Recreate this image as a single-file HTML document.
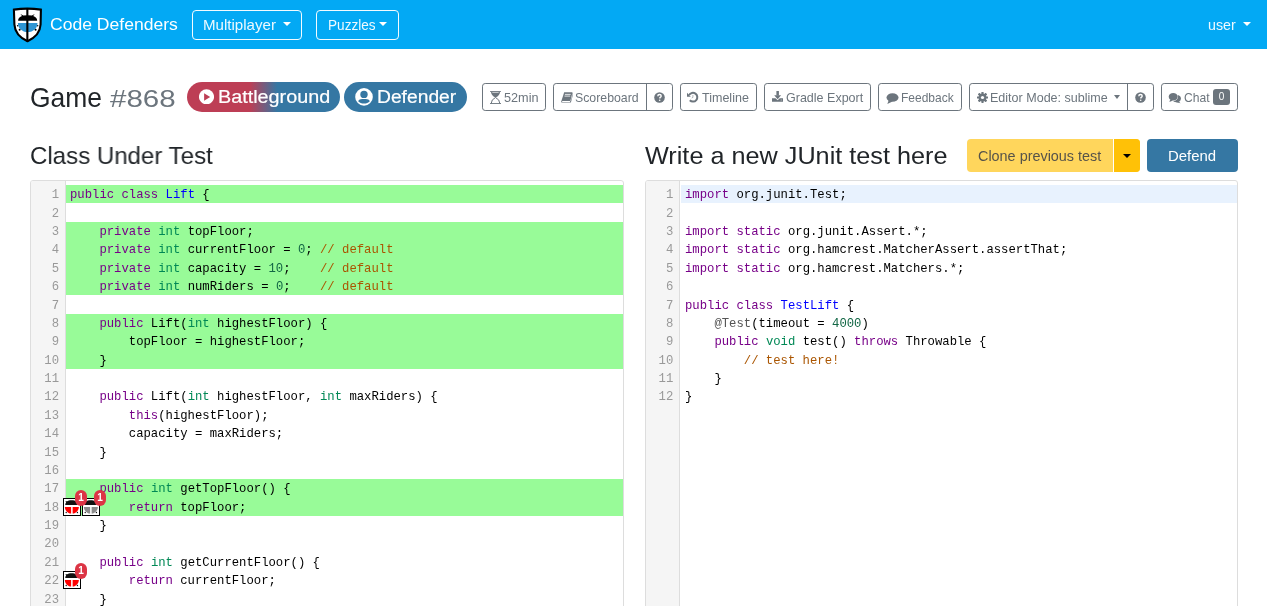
<!DOCTYPE html>
<html><head><meta charset="utf-8"><title>Code Defenders</title><style>
*{box-sizing:border-box;margin:0;padding:0}
html,body{width:1267px;height:606px;overflow:hidden;background:#fff}
body{font-family:"Liberation Sans",sans-serif;color:#212529;position:relative}
.abs{position:absolute;white-space:nowrap}
#nav{position:absolute;left:0;top:0;width:1267px;height:49px;background:#03a9f4}
.nbtn{position:absolute;top:10px;height:30px;border:1px solid rgba(255,255,255,.95);border-radius:4px}
.caret{position:absolute;width:0;height:0;border-left:4px solid transparent;border-right:4px solid transparent;border-top:4.5px solid #fff}
.wt{color:#fff}
.pill{position:absolute;top:82px;height:30px;border-radius:15px;color:#fff}
.ob{position:absolute;top:83px;height:28px;border:1px solid #6c757d;border-radius:3.2px;color:#6c757d}
.ed{position:absolute;top:180px;width:594px;height:440px;border:1px solid #ddd;border-radius:3px;overflow:hidden;background:#fff}
.gut{position:absolute;left:0;top:0;width:35px;height:100%;background:#f5f5f5;border-right:1px solid #ddd;padding-top:4px}
.gut div{height:18.375px;line-height:18.375px;font-family:"Liberation Mono",monospace;font-size:12.25px;color:#999;text-align:right;padding-right:6px}
.ed + .ed .gut div{padding-right:5.7px}
.code{position:absolute;left:35px;top:0;right:0;padding-top:4px}
.ln{height:18.375px;line-height:18.375px;font-family:"Liberation Mono",monospace;font-size:12.25px;color:#000;white-space:pre;padding-left:4px}
.ln.g{background:#98fb98}
.ln.a{background:#e8f2fe}
.tx{position:relative;top:1.3px} .gut div{position:relative;top:1.3px}
.k{color:#708} .t{color:#085} .d{color:#00f} .c{color:#a50} .n{color:#164} .m{color:#555}
.bug{position:absolute}
.bdg{position:absolute;width:12px;height:16px;border-radius:6px;background:#dc3545;color:#fff;font-size:10px;font-weight:bold;text-align:center;line-height:16px}
</style></head>
<body><div id="root" style="position:absolute;left:0;top:0;width:1267px;height:606px;overflow:hidden;will-change:transform">
<div id="nav"><svg class="abs" style="left:12px;top:7px" width="31" height="36" viewBox="0 0 31 36">
<path d="M1.9 2.6 Q15.3 0.6 28.9 2.6 L28.6 17.5 Q28 28.5 15.5 34.2 Q3 28.5 2.4 17.5 Z" fill="#fff" stroke="#000" stroke-width="2.1"/>
<path d="M6.1 13.7 C6.1 11.3 7.8 9.5 10 8.9 L8.4 6.9 L11.3 8.4 Q15.5 7.9 19.9 8.4 L22.8 6.9 L21.2 8.9 C23.4 9.5 25.2 11.3 25.2 13.7 Z" fill="#000"/>
<path d="M5.9 15.9 H25.5 C25.5 21.2 21.2 25 15.7 25 C10.2 25 5.9 21.2 5.9 15.9 Z" fill="#2e95d3"/>
<rect x="14.3" y="1.5" width="2.1" height="33" fill="#000"/>
<circle cx="7.6" cy="22.8" r="1" fill="#000"/><circle cx="23.6" cy="22.8" r="1" fill="#000"/>
<circle cx="5.6" cy="18.7" r="0.7" fill="#000"/><circle cx="25.7" cy="18.7" r="0.7" fill="#000"/>
</svg><div class="nbtn" style="left:192px;width:110px"></div><div class="caret" style="left:283px;top:22px"></div><div class="nbtn" style="left:316px;width:83px"></div><div class="caret" style="left:379.3px;top:22px"></div><div class="caret" style="left:1243px;top:22px"></div></div><div class="pill" style="left:187px;width:153px;background:linear-gradient(90deg,#bd3e55 41%,#3577a3 59%)"></div><svg class="abs" style="left:199px;top:88.7px" width="15" height="15.5" viewBox="0 0 15 15.5"><circle cx="7.5" cy="7.75" r="7.6" fill="#fff"/><path d="M5.1 4.2 L11.2 7.9 L5.1 11.7 Z" fill="#bd3e55"/></svg><div class="pill" style="left:344px;width:123px;background:#3577a3"></div><svg class="abs" style="left:355px;top:87.6px" width="18" height="18" viewBox="0 0 18 18"><circle cx="9" cy="8.9" r="8.8" fill="#fff"/><circle cx="9" cy="6.4" r="3.7" fill="#3577a3"/><path d="M3.2 13.2 C3.6 11.7 5.4 11 7.2 11 H10.8 C12.6 11 14.4 11.7 14.8 13.2 C13.4 14.8 11.4 15.6 9 15.6 C6.6 15.6 4.6 14.8 3.2 13.2 Z" fill="#3577a3"/></svg><div class="ob" style="left:482px;width:64px"></div><svg class="abs" style="left:490px;top:91px" width="11" height="13" viewBox="0 0 11 13"><path d="M0 0.3 H11 M0 12.6 H11" stroke="#6c757d" stroke-width="1"/><path d="M1 0.5 H10 Q10 4.5 5.5 6.5 Q1 4.5 1 0.5Z" fill="#6c757d"/><rect x="2.3" y="1.1" width="6.4" height="0.8" fill="#fff" opacity="0.75"/><path d="M1.2 12.5 Q1.2 8.5 5.5 6.5 Q9.8 8.5 9.8 12.5" fill="none" stroke="#6c757d" stroke-width="1"/></svg><div class="ob" style="left:553px;width:120px"></div><div class="abs" style="left:646px;top:83px;width:1px;height:28px;background:#6c757d"></div><svg class="abs" style="left:561px;top:92px" width="12" height="11" viewBox="0 0 12 11"><path d="M3.2 0.2 H11.3 L12 2.6 L9.9 10.6 H1.3 Q0 10.6 0.2 9.4 Z" fill="#6c757d"/><path d="M1.1 9 H9.2 L8.9 9.9 H1.2 Z" fill="#fff"/><path d="M11.3 1.3 L11.7 2.6 L9.7 9.6 L9.4 8.6 Z" fill="#fff" opacity="0.8"/><path d="M3.9 2.4 H9.7 M3.5 4.1 H9.2" stroke="#fff" stroke-width="0.8"/></svg><svg class="abs" style="left:654px;top:92.4px" width="11" height="11" viewBox="0 0 11 11"><circle cx="5.5" cy="5.5" r="5.3" fill="#6c757d"/><path d="M3.8 4.2 Q3.8 2.5 5.5 2.5 Q7.2 2.5 7.2 4 Q7.2 5 5.9 5.6 L5.9 6.6" fill="none" stroke="#fff" stroke-width="1.4"/><circle cx="5.7" cy="8.3" r="0.8" fill="#fff"/></svg><div class="ob" style="left:680px;width:77px"></div><svg class="abs" style="left:686px;top:91px" width="13" height="13" viewBox="0 0 13 13"><path d="M3.09 4.0 A4.4 4.4 0 1 1 3.79 9.31" fill="none" stroke="#6c757d" stroke-width="2"/><path d="M1 1.8 L4.8 5.8 L1 5.8 Z" fill="#6c757d"/><path d="M6.9 3.9 V6.4 L5.7 7" fill="none" stroke="#6c757d" stroke-width="0.9" opacity="0.6"/></svg><div class="ob" style="left:764px;width:107px"></div><svg class="abs" style="left:771.8px;top:91.1px" width="11" height="10.7" viewBox="0 0 11 10.7"><rect x="4.4" y="0" width="2.5" height="4.6" fill="#6c757d"/><path d="M2.2 4.3 H9.1 L5.65 8.2 Z" fill="#6c757d"/><path d="M0 7.2 H3.5 L5.65 9.3 L7.8 7.2 H11 V10.7 H0 Z" fill="#6c757d"/><rect x="8.6" y="8.6" width="1.4" height="0.8" fill="#fff" opacity="0.6"/></svg><div class="ob" style="left:878px;width:84px"></div><svg class="abs" style="left:885.6px;top:92.8px" width="13" height="12" viewBox="0 0 13 12"><ellipse cx="6.5" cy="4.5" rx="6" ry="4.3" fill="#6c757d"/><path d="M2.8 7 L1.3 11 L6.5 8.6 Z" fill="#6c757d"/></svg><div class="ob" style="left:969px;width:185px"></div><div class="abs" style="left:1127px;top:83px;width:1px;height:28px;background:#6c757d"></div><svg class="abs" style="left:977px;top:92px" width="11" height="11" viewBox="0 0 11 11"><g fill="#6c757d"><circle cx="5.5" cy="5.5" r="3.9"/><rect x="4.4" y="0" width="2.2" height="11" rx="0.4"/><rect x="4.4" y="0" width="2.2" height="11" rx="0.4" transform="rotate(45 5.5 5.5)"/><rect x="4.4" y="0" width="2.2" height="11" rx="0.4" transform="rotate(90 5.5 5.5)"/><rect x="4.4" y="0" width="2.2" height="11" rx="0.4" transform="rotate(135 5.5 5.5)"/></g><circle cx="5.5" cy="5.5" r="1.6" fill="#fff"/></svg><div class="caret" style="left:1113.5px;top:95px;border-top-color:#6c757d;border-left-width:3.5px;border-right-width:3.5px;border-top-width:4px"></div><svg class="abs" style="left:1135px;top:92.4px" width="11" height="11" viewBox="0 0 11 11"><circle cx="5.5" cy="5.5" r="5.3" fill="#6c757d"/><path d="M3.8 4.2 Q3.8 2.5 5.5 2.5 Q7.2 2.5 7.2 4 Q7.2 5 5.9 5.6 L5.9 6.6" fill="none" stroke="#fff" stroke-width="1.4"/><circle cx="5.7" cy="8.3" r="0.8" fill="#fff"/></svg><div class="ob" style="left:1161px;width:77px"></div><svg class="abs" style="left:1168px;top:92px" width="14" height="12" viewBox="0 0 14 12"><ellipse cx="8.6" cy="6.6" rx="4.3" ry="3.7" fill="#6c757d"/><path d="M10.4 9.2 L12.6 11.3 L8 10.2 Z" fill="#6c757d"/><ellipse cx="5.2" cy="4.8" rx="4.9" ry="4.1" fill="#fff"/><ellipse cx="5.2" cy="4.8" rx="4.5" ry="3.8" fill="#6c757d"/><path d="M2.2 7.4 L1.4 10 L5 8.4 Z" fill="#6c757d"/></svg><div class="abs" style="left:1213px;top:89px;width:17px;height:16px;background:#6c757d;border-radius:3px;color:#fff;font-size:10px;line-height:15.5px;text-align:center">0</div><div class="abs" style="left:967px;top:139px;width:173px;height:33px;background:#ffd65c;border-radius:4px"></div><div class="abs" style="left:1113px;top:139px;width:27px;height:33px;background:#ffc107;border-radius:0 4px 4px 0;border-left:1px solid #fff"></div><div class="caret" style="left:1123px;top:154px;border-top-color:#000;border-left-width:4px;border-right-width:4px;border-top-width:4.5px"></div><div class="abs" style="left:1147px;top:139px;width:91px;height:33px;background:#3577a3;border-radius:4px"></div><div class="abs" style="left:49.62px;top:16.01px;font-size:17.4px;line-height:17.4px;color:#fff;transform:scaleX(1.0097);transform-origin:0 0;">Code Defenders</div><div class="abs" style="left:202.99px;top:17.88px;font-size:14.5px;line-height:14.5px;color:rgba(255,255,255,.93);transform:scaleX(1.0403);transform-origin:0 0;">Multiplayer</div><div class="abs" style="left:327.61px;top:17.88px;font-size:14.5px;line-height:14.5px;color:rgba(255,255,255,.93);transform:scaleX(0.9378);transform-origin:0 0;">Puzzles</div><div class="abs" style="left:1207.80px;top:17.68px;font-size:14.5px;line-height:14.5px;color:rgba(255,255,255,.93);transform:scaleX(0.9826);transform-origin:0 0;">user</div><div class="abs" style="left:30.18px;top:83.50px;font-size:28px;line-height:28px;color:#212529;transform:scaleX(0.9438);transform-origin:0 0;">Game</div><div class="abs" style="left:110.30px;top:86.64px;font-size:24.3px;line-height:24.3px;color:#6c757d;transform:scaleX(1.2157);transform-origin:0 0;">#868</div><div class="abs" style="left:218.42px;top:87.70px;font-size:18px;line-height:18px;color:#fff;transform:scaleX(1.0991);transform-origin:0 0;-webkit-text-stroke:0.2px #fff;">Battleground</div><div class="abs" style="left:376.96px;top:87.50px;font-size:18px;line-height:18px;color:#fff;transform:scaleX(1.0697);transform-origin:0 0;-webkit-text-stroke:0.2px #fff;">Defender</div><div class="abs" style="left:503.99px;top:90.69px;font-size:13.3px;line-height:13.3px;color:#6c757d;transform:scaleX(0.9528);transform-origin:0 0;">52min</div><div class="abs" style="left:575.08px;top:90.69px;font-size:13.3px;line-height:13.3px;color:#6c757d;transform:scaleX(0.9257);transform-origin:0 0;">Scoreboard</div><div class="abs" style="left:701.55px;top:90.69px;font-size:13.3px;line-height:13.3px;color:#6c757d;transform:scaleX(0.9419);transform-origin:0 0;">Timeline</div><div class="abs" style="left:785.67px;top:90.69px;font-size:13.3px;line-height:13.3px;color:#6c757d;transform:scaleX(0.9414);transform-origin:0 0;">Gradle Export</div><div class="abs" style="left:900.64px;top:90.69px;font-size:13.3px;line-height:13.3px;color:#6c757d;transform:scaleX(0.9019);transform-origin:0 0;">Feedback</div><div class="abs" style="left:990.30px;top:90.69px;font-size:13.3px;line-height:13.3px;color:#6c757d;transform:scaleX(0.9425);transform-origin:0 0;">Editor Mode: sublime</div><div class="abs" style="left:1184.10px;top:90.69px;font-size:13.3px;line-height:13.3px;color:#6c757d;transform:scaleX(0.9088);transform-origin:0 0;">Chat</div><div class="abs" style="left:30.10px;top:144.03px;font-size:24.2px;line-height:24.2px;color:#212529;transform:scaleX(0.9947);transform-origin:0 0;">Class Under Test</div><div class="abs" style="left:645.35px;top:144.13px;font-size:24.2px;line-height:24.2px;color:#212529;transform:scaleX(1.0433);transform-origin:0 0;">Write a new JUnit test here</div><div class="abs" style="left:978.08px;top:148.05px;font-size:15px;line-height:15px;color:#56534a;transform:scaleX(0.9600);transform-origin:0 0;">Clone previous test</div><div class="abs" style="left:1168.01px;top:147.95px;font-size:15px;line-height:15px;color:#fff;transform:scaleX(0.9957);transform-origin:0 0;">Defend</div><div class="ed" style="left:30px"><div class="gut"><div>1</div><div>2</div><div>3</div><div>4</div><div>5</div><div>6</div><div>7</div><div>8</div><div>9</div><div>10</div><div>11</div><div>12</div><div>13</div><div>14</div><div>15</div><div>16</div><div>17</div><div>18</div><div>19</div><div>20</div><div>21</div><div>22</div><div>23</div><div>24</div></div><div class="code"><div class="ln g"><span class="tx"><span class="k">public</span> <span class="k">class</span> <span class="d">Lift</span> {</span></div><div class="ln"><span class="tx"></span></div><div class="ln g"><span class="tx">    <span class="k">private</span> <span class="t">int</span> topFloor;</span></div><div class="ln g"><span class="tx">    <span class="k">private</span> <span class="t">int</span> currentFloor = <span class="n">0</span>; <span class="c">// default</span></span></div><div class="ln g"><span class="tx">    <span class="k">private</span> <span class="t">int</span> capacity = <span class="n">10</span>;    <span class="c">// default</span></span></div><div class="ln g"><span class="tx">    <span class="k">private</span> <span class="t">int</span> numRiders = <span class="n">0</span>;    <span class="c">// default</span></span></div><div class="ln"><span class="tx"></span></div><div class="ln g"><span class="tx">    <span class="k">public</span> Lift(<span class="t">int</span> highestFloor) {</span></div><div class="ln g"><span class="tx">        topFloor = highestFloor;</span></div><div class="ln g"><span class="tx">    }</span></div><div class="ln"><span class="tx"></span></div><div class="ln"><span class="tx">    <span class="k">public</span> Lift(<span class="t">int</span> highestFloor, <span class="t">int</span> maxRiders) {</span></div><div class="ln"><span class="tx">        <span class="k">this</span>(highestFloor);</span></div><div class="ln"><span class="tx">        capacity = maxRiders;</span></div><div class="ln"><span class="tx">    }</span></div><div class="ln"><span class="tx"></span></div><div class="ln g"><span class="tx">    <span class="k">public</span> <span class="t">int</span> getTopFloor() {</span></div><div class="ln g"><span class="tx">        <span class="k">return</span> topFloor;</span></div><div class="ln"><span class="tx">    }</span></div><div class="ln"><span class="tx"></span></div><div class="ln"><span class="tx">    <span class="k">public</span> <span class="t">int</span> getCurrentFloor() {</span></div><div class="ln"><span class="tx">        <span class="k">return</span> currentFloor;</span></div><div class="ln"><span class="tx">    }</span></div><div class="ln"><span class="tx"></span></div></div></div><div class="ed" style="left:645px;width:593px"><div class="gut" style="width:34px"><div>1</div><div>2</div><div>3</div><div>4</div><div>5</div><div>6</div><div>7</div><div>8</div><div>9</div><div>10</div><div>11</div><div>12</div></div><div class="code"><div class="ln a"><span class="tx"><span class="k">import</span> org.junit.Test;</span></div><div class="ln"><span class="tx"></span></div><div class="ln"><span class="tx"><span class="k">import</span> <span class="k">static</span> org.junit.Assert.*;</span></div><div class="ln"><span class="tx"><span class="k">import</span> <span class="k">static</span> org.hamcrest.MatcherAssert.assertThat;</span></div><div class="ln"><span class="tx"><span class="k">import</span> <span class="k">static</span> org.hamcrest.Matchers.*;</span></div><div class="ln"><span class="tx"></span></div><div class="ln"><span class="tx"><span class="k">public</span> <span class="k">class</span> <span class="d">TestLift</span> {</span></div><div class="ln"><span class="tx">    <span class="m">@Test</span>(timeout = <span class="n">4000</span>)</span></div><div class="ln"><span class="tx">    <span class="k">public</span> <span class="t">void</span> test() <span class="k">throws</span> Throwable {</span></div><div class="ln"><span class="tx">        <span class="c">// test here!</span></span></div><div class="ln"><span class="tx">    }</span></div><div class="ln"><span class="tx">}</span></div></div></div><svg class="bug" style="left:63px;top:498px" width="18" height="18" viewBox="0 0 18 18">
<rect x="0.5" y="0.5" width="17" height="17" fill="#fff" stroke="#000" stroke-width="1"/>
<path d="M2.2 7 C2.4 4.2 4.5 2.2 8.6 2.2 C12.7 2.2 14.8 4.2 15 7 Z" fill="#111"/>
<path d="M2.4 3 L4.6 3.6 L3.6 5.2 Z" fill="#111"/>
<path d="M1.8 9 H8.1 V15.6 C4.6 15.4 2 12.6 1.8 9 Z" fill="#ff0000"/>
<path d="M9.6 9 H15.9 C15.7 12.6 13.1 15.4 9.6 15.6 Z" fill="#ff0000"/>
<circle cx="3.2" cy="14.5" r="0.7" fill="#111"/><circle cx="14.4" cy="14.5" r="0.7" fill="#111"/>
</svg><svg class="bug" style="left:82px;top:498px" width="18" height="18" viewBox="0 0 18 18">
<rect x="0.5" y="0.5" width="17" height="17" fill="#fff" stroke="#000" stroke-width="1"/>
<path d="M2.2 7 C2.4 4.2 4.5 2.2 8.6 2.2 C12.7 2.2 14.8 4.2 15 7 Z" fill="#111"/>
<path d="M2.4 3 L4.6 3.6 L3.6 5.2 Z" fill="#111"/>
<path d="M1.8 9 H8.1 V15.6 C4.6 15.4 2 12.6 1.8 9 Z" fill="#8c8c8c"/>
<path d="M9.6 9 H15.9 C15.7 12.6 13.1 15.4 9.6 15.6 Z" fill="#8c8c8c"/>
<circle cx="3.2" cy="14.5" r="0.7" fill="#111"/><circle cx="14.4" cy="14.5" r="0.7" fill="#111"/>
</svg><div class="bdg" style="left:75px;top:490px">1</div><div class="bdg" style="left:94px;top:490px">1</div><svg class="bug" style="left:63px;top:571px" width="18" height="18" viewBox="0 0 18 18">
<rect x="0.5" y="0.5" width="17" height="17" fill="#fff" stroke="#000" stroke-width="1"/>
<path d="M2.2 7 C2.4 4.2 4.5 2.2 8.6 2.2 C12.7 2.2 14.8 4.2 15 7 Z" fill="#111"/>
<path d="M2.4 3 L4.6 3.6 L3.6 5.2 Z" fill="#111"/>
<path d="M1.8 9 H8.1 V15.6 C4.6 15.4 2 12.6 1.8 9 Z" fill="#ff0000"/>
<path d="M9.6 9 H15.9 C15.7 12.6 13.1 15.4 9.6 15.6 Z" fill="#ff0000"/>
<circle cx="3.2" cy="14.5" r="0.7" fill="#111"/><circle cx="14.4" cy="14.5" r="0.7" fill="#111"/>
</svg><div class="bdg" style="left:75px;top:563px">1</div>
</div></body></html>
